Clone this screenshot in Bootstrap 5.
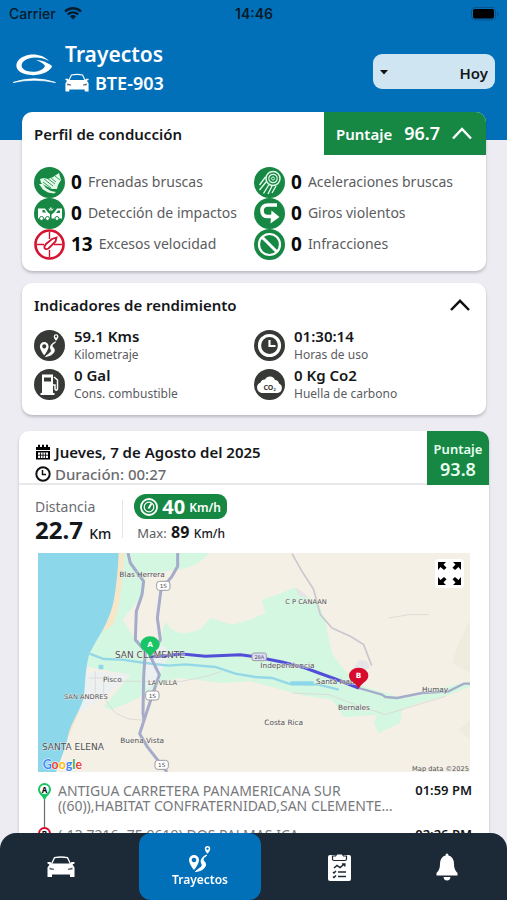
<!DOCTYPE html>
<html lang="es">
<head>
<meta charset="utf-8">
<meta name="viewport" content="width=device-width, initial-scale=1">
<title>Trayectos</title>
<link href="https://cdn.jsdelivr.net/npm/bootstrap@5.3.0/dist/css/bootstrap.min.css" rel="stylesheet">
<style>
  :root { --brand: #0170b9; --ok: #168843; --ink: #15171a; --soft: #5b5c60; --dark: #1c2a37; }
  body { font-family: "Noto Sans", "Open Sans", sans-serif; background: #edecf2; color: var(--ink); line-height: 1.2; }
  svg { display: block; flex: none; }
  h1, h2, p { margin: 0; }
  .app-head { background: var(--brand); height: 140px; color: #fff; }
  .status-row { font-family: Inter, sans-serif; font-size: 14px; font-weight: 500; height: 28px; color: #071b2b; display: grid; grid-template-columns: 1fr auto 1fr; padding: 0 8px 0 9px; }
  .app-bar { padding: 13px 12px 0; }
  .app-title { font-size: 21px; font-weight: 600; line-height: 27px; }
  .plate { font-size: 18px; font-weight: 600; line-height: 30px; gap: 6px; }
  .day-select { width: 122px; height: 35px; border: 0; border-radius: 9px; padding: 2px 7px 0 12px; font-size: 15px; font-weight: 600; color: var(--ink); text-align-last: right; appearance: none; background: #cfe5f2; }
  .day-caret { position: absolute; left: 7px; top: 16px; pointer-events: none; }
  .sheet { margin-top: -28px; padding: 0 21px 90px 22px; }
  .panel { background: #fff; border-radius: 10px; box-shadow: 0 2px 3px rgba(60, 60, 80, .28); overflow: hidden; }
  .panel-title { font-size: 15px; font-weight: 600; }
  .score-toggle { background: var(--ok); color: #fff; border: 0; width: 162px; height: 43px; padding: 0 14px 0 12px; font-size: 15px; font-weight: 600; }
  .score-toggle b { font-size: 18px; font-weight: 600; }
  .plain-toggle { background: none; border: 0; padding: 0; }
  .events { padding: 12px 12px 11px; }
  .event { height: 31px; font-size: 14px; color: var(--soft); }
  .event b { font-size: 19px; font-weight: 700; color: #08090a; margin: 0 6px; }
  .gauges { margin-top: 12px; }
  .gauges-head { padding: 8px 16px 0 12px; height: 43px; }
  .gauges-body { padding: 0 12px 11px; }
  .metric { height: 39px; gap: 9px; }
  .metric b { display: block; font-size: 15px; font-weight: 600; line-height: 19px; }
  .metric span { display: block; font-size: 12px; line-height: 18px; color: var(--soft); }
  .trip { margin: 16px -3px 0; }
  .trip-head { height: 54px; }
  .trip-info { border-bottom: 2px solid #e9e9ec; padding: 11px 0 0 16px; }
  .trip-info h2 { font-size: 15px; font-weight: 600; line-height: 20px; }
  .trip-info p { font-size: 15px; line-height: 24px; color: #6b6c70; font-weight: 500; }
  .trip-score { background: var(--ok); color: #e9fff1; width: 62px; font-size: 13px; font-weight: 600; line-height: 20px; }
  .trip-score b { display: block; font-size: 18px; font-weight: 600; }
  .stats { padding: 9px 16px 0; height: 68px; }
  .stat-name { font-size: 14px; line-height: 26px; color: #6b6c70; }
  .stat-big { font-size: 24px; font-weight: 700; line-height: 20px; }
  .stat-big small { font-size: 14px; font-weight: 500; }
  .rule { width: 1px; height: 38px; background: #e4e4e7; margin: 6px 11px 0; }
  .speed { background: var(--ok); color: #fff; border-radius: 12px 9px 9px 12px; height: 25px; padding: 0 6px; font-size: 12px; font-weight: 600; }
  .speed b { font-size: 20px; font-weight: 700; }
  .top-speed { font-size: 13px; line-height: 26px; color: var(--soft); padding-left: 3px; }
  .top-speed b { font-size: 16px; color: var(--ink); margin: 0 1px; }
  .top-speed span { font-size: 12px; font-weight: 500; color: var(--ink); }
  .map-box { margin: 0 19px; }
  .map-box svg.map-art { width: 100%; height: auto; }
  .expand-btn { position: absolute; top: 6px; right: 6px; width: 29px; height: 29px; border: 0; border-radius: 4px; background: #fff; padding: 3px; }
  .stops { padding: 11px 17px 0 19px; font-size: 14px; line-height: 15px; color: #78797d; }
  .stop { height: 44px; }
  .stop time { font-size: 13px; font-weight: 600; color: var(--ink); white-space: nowrap; }
  .stop p { padding-left: 7px; }
  .tabs { background: var(--dark); height: 67px; border-radius: 16px 16px 0 0; display: grid; grid-template-columns: 122fr 156fr 122fr 93fr; padding-right: 14px; }
  .tab-link { color: #fff; text-decoration: none; font-size: 12px; font-weight: 600; }
  .tab-on { background: var(--brand); border-radius: 12px; margin: 0 17px; }
</style>
<script src="https://cdn.jsdelivr.net/npm/bootstrap@5.3.0/dist/js/bootstrap.bundle.min.js"></script>
</head>
<body>
<svg width="0" height="0" class="position-absolute" aria-hidden="true">
  <symbol id="car" viewBox="0 0 28 22">
    <path d="M4.500 8 7.500 1.600Q14 .4 20.500 1.600L23.500 8" fill="none" stroke="currentColor" stroke-width="1.300"/>
    <path d="M.5 6h3l1 1.500h19l1-1.500h3v1.600l-2 .8 2 3V21h-4.500v-2.500h-18V21H.5v-9.600l2-3-2-.8z" fill="currentColor"/>
    <path d="M2.500 11.500l4.500 1.300v1.200l-4.500-.4zM25.500 11.500l-4.500 1.300v1.200l4.500-.4z" fill="#1c2a37" opacity=".7"/>
  </symbol>
  <symbol id="route" viewBox="0 0 24 28">
    <path d="M6 10a5 5 0 0 1 5 5c0 4-5 10-5 10s-5-6-5-10a5 5 0 0 1 5-5zm0 2.700a2.300 2.300 0 1 0 .01 0z" fill="currentColor" fill-rule="evenodd"/>
    <path d="M19.500 1a2.700 2.700 0 0 1 2.700 2.700c0 2-2.700 5-2.700 5s-2.700-3-2.700-5A2.700 2.700 0 0 1 19.500 1zm0 1.400a1.200 1.200 0 1 0 .01 0z" fill="currentColor" fill-rule="evenodd"/>
    <path d="M19 10c-1 1.500-3.500 2-4 4-.3 2 3 3 2.500 6-.5 3.500-4.500 6-10 6.500 2-1.500 3-2.500 5-4 2-1.500 2-3 1-4.500-1.500-3 1.500-7 5.500-8z" fill="currentColor" stroke="currentColor"/>
  </symbol>
</svg>

<div class="vh-100 overflow-hidden position-relative">
  <header class="app-head">
    <div class="status-row align-items-center">
      <span class="d-flex align-items-center gap-2">Carrier
        <svg width="18" height="13" viewBox="0 0 18 13" fill="none" stroke="#071b2b" stroke-width="2.400"><path d="M1 4.500a11.500 11.500 0 0 1 16 0M3.800 7.500a7.500 7.500 0 0 1 10.400 0"/><path d="M6 9.300a4.500 4.500 0 0 1 6 0L9 12.500z" fill="#071b2b" stroke="none"/></svg>
      </span>
      <strong class="fw-semibold">14:46</strong>
      <svg class="ms-auto" width="28" height="14" viewBox="0 0 28 14"><rect x=".5" y=".5" width="24" height="12.500" rx="3.500" fill="none" stroke="#07558c"/><rect x="2" y="2" width="21" height="9.500" rx="2" fill="#000"/><path d="M26 5v4q1.500-.6 1.500-2T26 5z" fill="#07558c"/></svg>
    </div>
    <div class="app-bar d-flex align-items-center">
      <svg width="45" height="34" viewBox="0 0 45 34">
        <path d="M37 8C31 1.500 21 0 13 3 4 6 2 13.500 7 18c6 5.500 22 5.500 29 0 2-1.500 4-3.500 4-5-4-3.200-10-6-16-6 5 1.800 8 4 9 6-2 5-11 7-18 5-6-2-7-6.500-3-10C17 3.500 28 3 37 8z" fill="#fff"/>
        <path d="M1 29.500Q22 22 43.500 29.500 22 25 1 29.500z" fill="#fff" stroke="#fff" stroke-width=".7"/>
      </svg>
      <div class="ps-1 ms-1 flex-grow-1">
        <h1 class="app-title">Trayectos</h1>
        <div class="plate d-flex align-items-center"><svg width="24" height="20"><use href="#car"/></svg>BTE-903</div>
      </div>
      <div class="position-relative mt-1">
        <select class="day-select" aria-label="Periodo"><option>Hoy</option></select>
        <svg class="day-caret" width="8" height="5" viewBox="0 0 8 5"><path d="M0 0h8L4 4.500z" fill="#111"/></svg>
      </div>
    </div>
  </header>

  <main class="sheet position-relative">
    <section class="panel">
      <div class="d-flex align-items-center justify-content-between ps-2">
        <h2 class="panel-title ps-1">Perfil de conducción</h2>
        <button class="score-toggle d-flex align-items-center justify-content-between" type="button"><span>Puntaje</span><b>96.7</b>
          <svg width="20" height="13" viewBox="0 0 20 13" fill="none" stroke="#fff" stroke-width="2.500"><path d="M1 11.500 10 2l9 9.500"/></svg></button>
      </div>
      <div class="events row g-0">
        <div class="col-6">
          <div class="event d-flex align-items-center">
            <svg width="31" height="31" viewBox="0 0 31 31"><circle cx="15.500" cy="15.500" r="15.500" fill="#168843"/><path d="M5 17l4 0 3 4 5 3 5 1-2 1.500-6-1-5-3z" fill="#e3fae9"/><path d="M6 12l4-1 4 1 5-2 6-4 2 7-3 5-1 4-5 0-6-3-5-3z" fill="#e3fae9"/><path d="M10 12l9 7M13 11l8 6M17 11l5 4M9 15l8 6M21 9l5 4" stroke="#168843" stroke-width=".8"/></svg>
            <b>0</b>Frenadas bruscas</div>
          <div class="event d-flex align-items-center">
            <svg width="31" height="31" viewBox="0 0 31 31"><circle cx="15.500" cy="15.500" r="15.500" fill="#168843"/><path d="M4 10.500h7l3 4 2 1.500v4.500H4zM28 10.500h-5l-3 4-2.500 2v4H28z" fill="#fff"/><path d="M8.500 12h2l1.500 2.500H8.500zM24 12.500l-2 2.500h4v-2.500z" fill="#168843"/><g fill="#fff" stroke="#168843"><circle cx="7.500" cy="20.500" r="2"/><circle cx="13.500" cy="20.500" r="2"/><circle cx="23" cy="20.500" r="2"/></g><path d="M15 10.500l1 2 .8-3 1 3 1.500-2" stroke="#fff" fill="none" stroke-width=".8"/></svg>
            <b>0</b>Detección de impactos</div>
          <div class="event d-flex align-items-center">
            <svg width="31" height="31" viewBox="0 0 31 31" fill="none" stroke="#d5122f"><circle cx="15.500" cy="15.500" r="14" stroke-width="2.600"/><path d="M15.500 3v7M15.500 21v7M3 15.500h7M20 15.500h8" stroke-width="1.400"/><path d="M22.500 8.500l-1 4-7 7q-3 1.500-4-.5-.5-2 1.500-4l6-5z" fill="#fff" stroke-width="1.800"/></svg>
            <b>13</b>Excesos velocidad</div>
        </div>
        <div class="col-6">
          <div class="event d-flex align-items-center">
            <svg width="31" height="31" viewBox="0 0 31 31" fill="none" stroke="#e3fae9"><circle cx="15.500" cy="15.500" r="15.500" fill="#168843" stroke="none"/><circle cx="19" cy="11.500" r="7" stroke-width="1.500"/><circle cx="19" cy="11.500" r="4.200" stroke-width="1.200"/><circle cx="19" cy="11.500" r="1.500"/><path d="M11.500 10l-6 8M12.500 14.500l-7 8.500M15 17.500l-5.500 9M18 19l-4 8M22 19l-4 7" stroke-width="1.400"/></svg>
            <b>0</b>Aceleraciones bruscas</div>
          <div class="event d-flex align-items-center">
            <svg width="31" height="31" viewBox="0 0 31 31"><circle cx="15.500" cy="15.500" r="15.500" fill="#168843"/><path d="M23 7H14q-6 0-6 5.800T14 18.500h5" fill="none" stroke="#fff" stroke-width="3.600"/><path d="M17.500 12.500l8 6.500-9 6.500z" fill="#fff"/></svg>
            <b>0</b>Giros violentos</div>
          <div class="event d-flex align-items-center">
            <svg width="31" height="31" viewBox="0 0 31 31"><circle cx="15.500" cy="15.500" r="15.500" fill="#168843"/><circle cx="15.500" cy="15.500" r="10.500" fill="none" stroke="#fff" stroke-width="2.200"/><path d="M8.200 8.200l14.600 14.600" stroke="#fff" stroke-width="3"/></svg>
            <b>0</b>Infracciones</div>
        </div>
      </div>
    </section>

    <section class="panel gauges">
      <div class="gauges-head d-flex align-items-center justify-content-between pb-2">
        <h2 class="panel-title">Indicadores de rendimiento</h2>
        <button class="plain-toggle" type="button" aria-label="Contraer"><svg width="20" height="12" viewBox="0 0 20 12" fill="none" stroke="#111" stroke-width="2.500"><path d="M1 11 10 1.800 19 11"/></svg></button>
      </div>
      <div class="gauges-body row g-0">
        <div class="col-6">
          <div class="metric d-flex align-items-center"><svg width="31" height="31" viewBox="0 0 31 31"><circle cx="15.500" cy="15.500" r="15.500" fill="#363936"/><use href="#route" x="5" y="3" width="21" height="25" color="#fff"/></svg>
            <div><b>59.1 Kms</b><span>Kilometraje</span></div></div>
          <div class="metric d-flex align-items-center"><svg width="31" height="31" viewBox="0 0 31 31"><circle cx="15.500" cy="15.500" r="15.500" fill="#363936"/><path d="M8 5.500h11V24h1.500v2h-14v-2H8z" fill="#fff"/><path d="M10 8.500h7v4h-7z" fill="#363936"/><path d="M20 8l3.500 3v9q-1.500 2.500-2.500 0v-4h-2" fill="none" stroke="#fff" stroke-width="1.500"/></svg>
            <div><b>0 Gal</b><span>Cons. combustible</span></div></div>
        </div>
        <div class="col-6">
          <div class="metric d-flex align-items-center"><svg width="31" height="31" viewBox="0 0 31 31"><circle cx="15.500" cy="15.500" r="15.500" fill="#363936"/><circle cx="15.500" cy="15.500" r="10" fill="#363936" stroke="#fff" stroke-width="3.200"/><path d="M15.500 10v6h6" fill="none" stroke="#fff" stroke-width="2.200"/></svg>
            <div><b>01:30:14</b><span>Horas de uso</span></div></div>
          <div class="metric d-flex align-items-center"><svg width="31" height="31" viewBox="0 0 31 31"><circle cx="15.500" cy="15.500" r="15.500" fill="#363936"/><path d="M7.500 24a5.500 5.500 0 0 1-1-10.500 4.500 4.500 0 0 1 4.500-3 5.500 5.500 0 0 1 10 .5 4.500 4.500 0 0 1 4 3.500 5 5 0 0 1-1.500 9.500z" fill="#fff"/><text x="9.500" y="20.500" font-size="7" font-weight="700" fill="#363936">CO<tspan font-size="4" dy="1">2</tspan></text></svg>
            <div><b>0 Kg Co2</b><span>Huella de carbono</span></div></div>
        </div>
      </div>
    </section>

    <article class="panel trip">
      <div class="trip-head d-flex">
        <div class="trip-info flex-grow-1">
          <h2 class="d-flex align-items-center"><svg class="me-1" width="16" height="16" viewBox="0 0 16 16"><path d="M1 3h2V.8h2V3h2V.8h2V3h2V.8h2V3h2v3H1z"/><path d="M1 7h14v8.500H1z"/><path d="M3 8.500h10v5.500H3z" fill="#fff"/><path d="M3 11.200h10M5.500 8.500V14M8 8.500V14M10.500 8.500V14" stroke="#111" stroke-width=".9"/></svg>Jueves, 7 de Agosto del 2025</h2>
          <p class="d-flex align-items-center"><svg class="me-1" width="16" height="16" viewBox="0 0 16 16" fill="none" stroke="#111"><circle cx="8" cy="8" r="6.700" stroke-width="2"/><path d="M7.500 4v4.500H11" stroke-width="1.500"/></svg>Duración: 00:27</p>
        </div>
        <div class="trip-score text-center pt-2 d-flex flex-column"><span>Puntaje</span><b>93.8</b></div>
      </div>
      <div class="stats d-flex">
        <div>
          <div class="stat-name">Distancia</div>
          <div class="stat-big">22.7 <small>Km</small></div>
        </div>
        <div class="rule"></div>
        <div>
          <div class="speed d-flex align-items-center gap-1"><svg width="18" height="18" viewBox="0 0 18 18" fill="none" stroke="#fff"><circle cx="9" cy="9" r="8" stroke-width="1.800"/><circle cx="9" cy="9" r="4.800" stroke-width="1.200"/><path d="M11.500 5.500L8.500 10.500" stroke-width="1.800"/></svg><b>40</b><span class="pt-1">Km/h</span></div>
          <div class="top-speed">Max: <b>89</b> <span>Km/h</span></div>
        </div>
      </div>
      <div class="map-box position-relative">
        <svg class="map-art" viewBox="8 10 1296 657" font-family="DejaVu Sans, sans-serif" font-size="22" fill="#4c4f55" role="img" aria-label="Mapa del trayecto">
          <rect x="8" y="10" width="1296" height="657" fill="#f5f0e5"/>
          <path d="M1304 210L1270 280 1250 340 1304 370zM1270 540l34-30v60z" fill="#efebdd"/>
          <path d="M255 10H520C490 50 440 60 410 62L332 75 325 130 262 210 300 270 375 272 390 213C405 250 450 262 500 235L525 205 590 225 645 210 690 190 680 150 740 130 780 113 850 165C870 200 880 270 890 310 920 360 960 400 1000 415L1100 445C1150 440 1180 430 1200 420L1304 395V412L1240 435 1150 460 1100 480 1095 520 1030 550 1015 520 1025 495 925 503 910 480 890 450 800 437 700 410 645 395 560 400 480 390 430 385 380 400 345 420 300 450 225 482 205 470 240 430 285 375 200 360 150 350 163 310 200 245 235 155z" fill="#d3f7e1"/>
          <path d="M248 10h20C262 100 250 190 233 225L200 247zM146 440L135 480 100 560 90 560 98 525z" fill="#f8e6c9"/>
          <path d="M157 365L285 375 240 415 205 440 140 485 125 480zM355 285l35 5 10 30-40 80-25 20-10-60z" fill="#edf0f1"/>
          <path d="M780 115l20 10 20 20-30-5zM970 330l25 5 10 20-30 10-20-10z" fill="#e5e4e7"/>
          <path d="M8 10H250C248 60 243 110 235 155 225 200 205 240 185 270L163 310C150 350 150 400 146 440 138 480 105 520 98 560 90 600 75 630 62 667H8z" fill="#8dd7eb"/>
          <path d="M163 312L205 328 260 330 330 340 400 348 450 344 540 352 600 372 660 382 710 385 760 402 850 405 910 420" fill="none" stroke="#94d8e8" stroke-width="7"/>
          <path d="M765 401h70M190 352h14" stroke="#8dd7eb" stroke-width="13"/>
          <g fill="none" stroke="#dddcd8" stroke-width="3"><path d="M230 395H440L520 378 560 365M160 385h45v50M180 365v65M210 450L240 490 280 508 330 512M770 430L880 435 960 465 1050 495 1130 470 1230 440M1060 205l60-10 60 0"/></g>
          <path d="M770 12L800 65 835 120 855 195 890 235 945 260 985 285 1009 348" fill="none" stroke="#c9c8cf" stroke-width="5"/>
          <g fill="none" stroke="#a5abca" stroke-width="9" stroke-linejoin="round"><path d="M278 10L285 40 325 95 320 135 303 185 300 270 330 305 325 380 323 490 326 512"/><path d="M427 10V50L410 80 377 120 366 205 375 270 345 320 372 375 350 440 330 500 313 552 335 590 395 667"/><path d="M970 415L1040 435 1050 442 1085 445 1160 430 1240 425 1285 402H1304" stroke-width="7"/></g>
          <path d="M345 322L440 313 510 320 615 315 660 321 740 337 810 355 900 388 970 415" fill="none" stroke="#524ed8" stroke-width="9"/>
          <g fill="#fff" stroke="#9b9ca3" stroke-width="3"><rect x="364" y="95" width="40" height="27" rx="8"/><rect x="331" y="424" width="40" height="27" rx="8"/><rect x="359" y="632" width="40" height="27" rx="8"/><rect x="650" y="310" width="43" height="23" rx="6" fill="#dfdcfa"/></g>
          <g font-size="17" text-anchor="middle"><text x="384" y="115">1S</text><text x="351" y="444">1S</text><text x="379" y="652">1S</text><text x="672" y="328" font-size="15">28A</text></g>
          <g stroke="#f8f6ee" stroke-width="2" paint-order="stroke">
            <text x="252" y="82">Blas Herrera</text><text x="203" y="397">Pisco</text><text x="255" y="581">Buena Vista</text>
            <text x="675" y="356">Independencia</text><text x="842" y="402">Santa Isabel</text><text x="1160" y="428">Humay</text><text x="908" y="481">Bernales</text><text x="687" y="526">Costa Rica</text>
            <text x="239" y="325" font-size="27">SAN CLEMENTE</text><text x="338" y="405" font-size="20">LA VILLA</text><text x="86" y="447" font-size="20">SAN ANDRES</text><text x="20" y="602" font-size="27">SANTA ELENA</text><text x="750" y="164" font-size="20">C P CANAAN</text>
          </g>
          <text x="1301" y="663" font-size="20" text-anchor="end">Map data ©2025</text>
          <g font-family="Lato, sans-serif" font-size="37" font-weight="700" stroke="#fff" stroke-width="3" paint-order="stroke"><text x="22" y="659"><tspan fill="#4285f4">G</tspan><tspan fill="#ea4335">o</tspan><tspan fill="#fbbc05">o</tspan><tspan fill="#4285f4">g</tspan><tspan fill="#34a853">l</tspan><tspan fill="#ea4335">e</tspan></text></g>
          <path d="M344 325C338 305 315 302 315 284a29 24 0 0 1 58 0C373 302 350 305 344 325z" fill="#18c463"/>
          <path d="M970 419C964 399 941 396 941 378a29 24 0 0 1 58 0C999 396 976 399 970 419z" fill="#d60b2d"/>
          <g font-size="22" font-weight="700" fill="#fff" text-anchor="middle"><text x="344" y="292">A</text><text x="970" y="386">B</text></g>
        </svg>
        <button class="expand-btn" type="button" aria-label="Ampliar mapa"><svg width="23" height="23" viewBox="0 0 23 23" fill="#000"><path id="xa" d="M0 0h8L5.500 2.500 8.500 5.700 6 8 2.500 5 0 8z"/><use href="#xa" transform="matrix(-1 0 0 1 23 0)"/><use href="#xa" transform="matrix(1 0 0 -1 0 23)"/><use href="#xa" transform="matrix(-1 0 0 -1 23 23)"/></svg></button>
      </div>
      <div class="stops">
        <div class="stop d-flex justify-content-between">
          <div class="d-flex">
            <svg width="13" height="44" viewBox="0 0 13 44"><path d="M6.500 14v30" stroke="#6b6c70" stroke-width="1.200"/><path d="M6.500 18C5.500 13.500 0 11 0 6.500a6.500 6.500 0 0 1 13 0C13 11 7.500 13.500 6.500 18z" fill="#18c463"/><circle cx="6.500" cy="6.500" r="4.500" fill="#fff"/><text x="6.500" y="9.500" font-size="8" font-weight="700" text-anchor="middle">A</text></svg>
            <p>ANTIGUA CARRETERA PANAMERICANA SUR ((60)),HABITAT CONFRATERNIDAD,SAN CLEMENTE…</p>
          </div>
          <time>01:59 PM</time>
        </div>
        <div class="stop d-flex justify-content-between">
          <div class="d-flex">
            <svg width="13" height="20" viewBox="0 0 13 20"><path d="M6.500 18C5.500 13.500 0 11 0 6.500a6.500 6.500 0 0 1 13 0C13 11 7.500 13.500 6.500 18z" fill="#d60b2d"/><circle cx="6.500" cy="6.500" r="4.500" fill="#fff"/><text x="6.500" y="9.500" font-size="8" font-weight="700" text-anchor="middle">B</text></svg>
            <p>(-13.7216,-75.9619),DOS PALMAS,ICA</p>
          </div>
          <time>02:26 PM</time>
        </div>
      </div>
    </article>
  </main>

  <nav class="tabs fixed-bottom" aria-label="Principal">
    <a class="tab-link d-flex align-items-center justify-content-center" href="#" aria-label="Vehículos"><svg width="28" height="22"><use href="#car"/></svg></a>
    <a class="tab-link tab-on d-flex flex-column align-items-center justify-content-center" href="#" aria-current="page"><svg width="24" height="28"><use href="#route"/></svg><span>Trayectos</span></a>
    <a class="tab-link d-flex align-items-center justify-content-center" href="#" aria-label="Reportes"><svg width="23" height="28" viewBox="0 0 23 28"><rect y="2" width="23" height="26" rx="2" fill="#fff"/><path d="M4.500 3h3l1.500-2h5l1.500 2h3v3q0 1.500-1.500 1.500H6Q4.500 7.500 4.500 6z" fill="#fff" stroke="#1c2a37" stroke-width="1.200"/><path d="M6 15l3-2.500 3 2L16.500 11M14 11h2.800v2.500M5 19l1 1 2-2M10 19h8M5 23.500l1 1 2-2M10 23.500h8" fill="none" stroke="#1c2a37" stroke-width="1.500"/></svg></a>
    <a class="tab-link d-flex align-items-center justify-content-center" href="#" aria-label="Notificaciones"><svg width="22" height="28" viewBox="0 0 22 28" fill="#fff"><path d="M9.500 2.500Q9.500.5 11 .5t1.500 2Q18 4 18 11q0 6 3.500 9v2.500H.5V20Q4 17 4 11q0-7 5.500-8.500zM7.500 24h7q-.5 3.500-3.500 3.500T7.500 24z"/></svg></a>
  </nav>
</div>
</body>
</html>
